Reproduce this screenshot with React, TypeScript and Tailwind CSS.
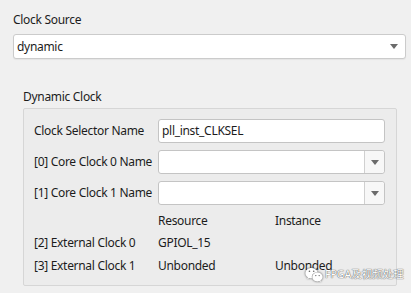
import { FaWeixin } from "react-icons/fa";

function Arrow() {
  return (
    <svg width="8" height="5" viewBox="0 0 8 5" className="shrink-0">
      <path d="M0 0 H8 L4 5 Z" fill="#6b6b6b" />
    </svg>
  );
}

function ComboField({ value = "" }: { value?: string }) {
  return (
    <div className="flex h-[24px] w-[227px] rounded-[3px] border border-[#c4c4c4] bg-white">
      <div className="flex-1 px-[3px] leading-[22px]">{value}</div>
      <div className="flex w-[20px] items-center justify-center rounded-r-[3px] border-l border-[#d0d0d0] bg-[#f7f7f7]">
        <Arrow />
      </div>
    </div>
  );
}

export default function App() {
  return (
    <div
      className="relative h-[293px] w-[411px] overflow-hidden whitespace-nowrap bg-[#f0f0f0] text-[12px] tracking-[-0.3px] text-[#1c1c1c]"
      style={{ fontFamily: '"Noto Sans", "Noto Sans CJK SC", sans-serif' }}
    >
      <div className="pl-[13px] pr-[5px] pt-[11px]">
        {/* Clock Source */}
        <div className="h-[18px] leading-[18px]">Clock Source</div>
        <div className="mt-[5px] flex h-[25px] items-center justify-between rounded-[3px] border border-[#cbcbcb] bg-white pl-[3px] pr-[7px] shadow-[0_1px_1px_rgba(0,0,0,0.05)]">
          <span>dynamic</span>
          <Arrow />
        </div>

        {/* Dynamic Clock group */}
        <div className="ml-[10px] w-[374px]">
          <div className="mt-[29px] h-[18px] leading-[18px]">Dynamic Clock</div>
          <div className="mt-[2px] h-[178px] rounded-[2px] border border-[#d6d6d6] bg-[#ececec] pl-[10px] pt-[10px]">
            <div className="flex flex-col gap-[7px]">
              <div className="flex items-center">
                <div className="w-[124px]">Clock Selector Name</div>
                <div className="h-[24px] w-[227px] rounded-[3px] border border-[#c4c4c4] bg-white px-[3px] leading-[22px]">
                  pll_inst_CLKSEL
                </div>
              </div>
              <div className="flex items-center">
                <div className="w-[124px]">[0] Core Clock 0 Name</div>
                <ComboField />
              </div>
              <div className="flex items-center">
                <div className="w-[124px]">[1] Core Clock 1 Name</div>
                <ComboField />
              </div>
            </div>

            <div className="mt-[7px] flex h-[18px] items-center">
              <div className="w-[124px]" />
              <div className="w-[117px]">Resource</div>
              <div>Instance</div>
            </div>
            <div className="mt-[4px] flex h-[18px] items-center">
              <div className="w-[124px]">[2] External Clock 0</div>
              <div className="w-[117px]">GPIOL_15</div>
              <div />
            </div>
            <div className="mt-[5px] flex h-[18px] items-center">
              <div className="w-[124px]">[3] External Clock 1</div>
              <div className="w-[117px]">Unbonded</div>
              <div>Unbonded</div>
            </div>
          </div>
        </div>
      </div>

      {/* watermark */}
      <div className="absolute left-[305px] top-[266px] flex items-center gap-[2px] text-white">
        <FaWeixin className="h-[18px] w-[18px] text-white drop-shadow-[0_0_1px_rgba(0,0,0,0.7)]" />
        <span className="text-[10.5px] tracking-normal" style={{ textShadow: "0 0 1px #555, 0 0 1px #555" }}>
          FPGA及视频处理
        </span>
      </div>
    </div>
  );
}
